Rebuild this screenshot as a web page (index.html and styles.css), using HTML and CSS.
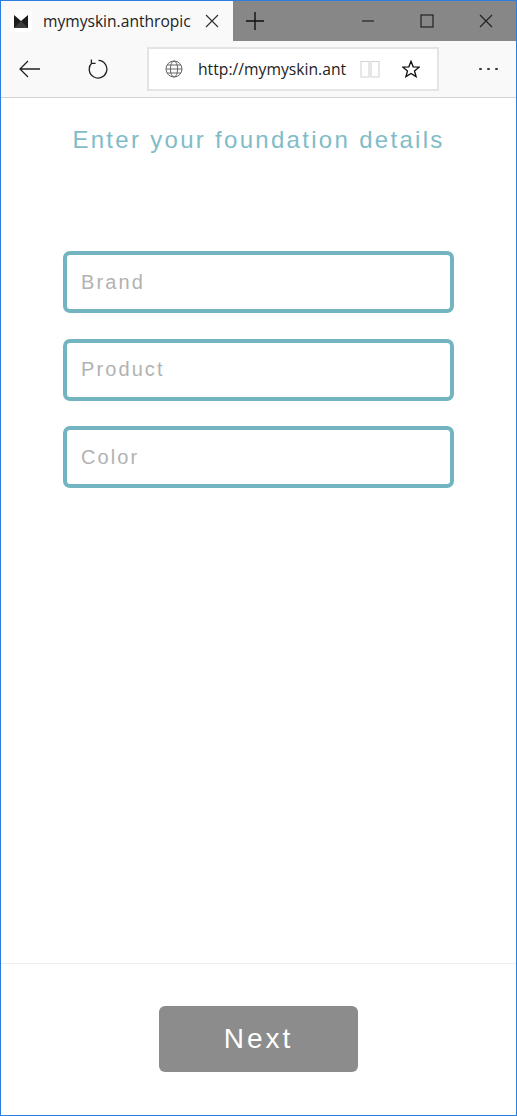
FILE: index.html
```html
<!DOCTYPE html>
<html lang="en">
  <head>
    <meta charset="UTF-8" />
    <meta name="viewport" content="width=device-width, initial-scale=1.0" />
    <title>mymyskin.anthropic</title>
    <link rel="stylesheet" href="styles.css">
  </head>
  <body>
    <div class="window">
      <!-- browser tabs -->
      <div class="tabbar">
        <div class="tab">
          <span class="favicon">
            <svg width="14" height="13" viewBox="0 0 14 13">
              <path d="M0 0 L7 6 L14 0 V13 H0 Z" fill="#1c1c1c" />
              <path d="M7 6 L14 13 H0 Z" fill="#3c3c3c" />
            </svg>
          </span>
          <span class="tab-title">mymyskin.anthropic</span>
          <svg class="tab-close" width="14" height="14" viewBox="0 0 14 14"><path d="M1 1 L13 13 M13 1 L1 13" stroke="#333" stroke-width="1.2" fill="none" /></svg>
        </div>
        <svg class="new-tab" width="18" height="18" viewBox="0 0 18 18"><path d="M9 0 V18 M0 9 H18" stroke="#111" stroke-width="1.4" fill="none" /></svg>
        <div class="window-btns">
          <svg width="14" height="14" viewBox="0 0 14 14"><path d="M1 7 H13" stroke="#222" stroke-width="1.2" fill="none" /></svg>
          <svg width="14" height="14" viewBox="0 0 14 14"><rect x="1" y="1" width="12" height="12" stroke="#222" stroke-width="1.2" fill="none" /></svg>
          <svg width="14" height="14" viewBox="0 0 14 14"><path d="M1 1 L13 13 M13 1 L1 13" stroke="#222" stroke-width="1.2" fill="none" /></svg>
        </div>
      </div>

      <!-- address bar -->
      <div class="toolbar">
        <svg class="back" width="22" height="18" viewBox="0 0 22 18"><path d="M21 9 H1 M9 1 L1 9 L9 17" stroke="#222" stroke-width="1.3" fill="none" /></svg>
        <svg class="reload" width="20" height="20" viewBox="0 0 20 20"><path d="M3.8 4 A8.8 8.8 0 1 0 10.5 1.4 M3.4 0.4 V4.4 H7.6" stroke="#222" stroke-width="1.3" fill="none" /></svg>
        <div class="urlbox">
          <svg class="globe" width="18" height="18" viewBox="0 0 18 18">
            <g stroke="#666" stroke-width="1" fill="none">
              <circle cx="9" cy="9" r="8" />
              <ellipse cx="9" cy="9" rx="3.6" ry="8" />
              <path d="M1 9 H17 M2 5 H16 M2 13 H16" />
            </g>
          </svg>
          <span class="url">http://mymyskin.ant</span>
          <svg class="book" width="20" height="18" viewBox="0 0 20 18"><path d="M1 1.5 H9 V17 H1 Z M19 1.5 H11 V17 H19 Z" stroke="#d4d4d4" stroke-width="1.1" fill="none" /></svg>
          <svg class="star" width="18" height="18" viewBox="0 0 20 20"><path d="M10 1.5 L12.4 7.6 L19 8 L13.9 12.1 L15.6 18.5 L10 15 L4.4 18.5 L6.1 12.1 L1 8 L7.6 7.6 Z" stroke="#111" stroke-width="1.5" fill="none" /></svg>
        </div>
        <div class="more"><span></span><span></span><span></span></div>
      </div>

      <!-- page -->
      <div class="page">
        <h1>Enter your foundation details</h1>
        <form class="fields">
          <input type="text" placeholder="Brand" />
          <input type="text" placeholder="Product" />
          <input type="text" placeholder="Color" />
        </form>
      </div>
      <div class="footer">
        <button type="button">Next</button>
      </div>
    </div>
  </body>
</html>
```

FILE: styles.css
```css
html,
body {
  margin: 0;
  height: 100%;
}

body {
  font-family: "Liberation Sans", Arial, sans-serif;
  background-color: white;
}

.window {
  height: 1116px;
  box-sizing: border-box;
  border: 1px solid #2b7de0;
  display: flex;
  flex-direction: column;
  overflow: hidden;
}

.tabbar {
  height: 40px;
  background-color: #878787;
  display: flex;
  align-items: center;
  flex-shrink: 0;
}

.tab {
  width: 232px;
  height: 100%;
  background-color: #f9f9f9;
  display: flex;
  align-items: center;
  box-sizing: border-box;
  padding-left: 9px;
}

.favicon {
  width: 22px;
  height: 22px;
  background-color: white;
  border-radius: 3px;
  display: flex;
  align-items: center;
  justify-content: center;
  flex-shrink: 0;
}

.tab-title {
  font-family: "Open Sans", sans-serif;
  font-size: 15.6px;
  color: #222;
  margin-left: 11px;
  white-space: nowrap;
}

.tab-close {
  margin-left: 14px;
  flex-shrink: 0;
}

.new-tab {
  margin-left: 13px;
}

.window-btns {
  margin-left: auto;
  display: flex;
  gap: 45px;
  padding-right: 23px;
}

.toolbar {
  height: 56px;
  background-color: #f9f9f9;
  border-bottom: 1px solid #d2d2d2;
  display: flex;
  align-items: center;
  flex-shrink: 0;
}

.back {
  margin-left: 18px;
}

.reload {
  margin-left: 47px;
}

.urlbox {
  width: 292px;
  height: 44px;
  margin-left: 39px;
  box-sizing: border-box;
  background-color: white;
  border: 2px solid #e4e4e4;
  display: flex;
  align-items: center;
  padding-left: 16px;
}

.url {
  font-family: "Open Sans", sans-serif;
  font-size: 15.7px;
  color: #222;
  margin-left: 15px;
  white-space: nowrap;
}

.book {
  margin-left: 14px;
  flex-shrink: 0;
}

.star {
  margin-left: 22px;
  flex-shrink: 0;
}

.more {
  margin-left: 40px;
  display: flex;
  gap: 5.5px;
}

.more span {
  width: 2.5px;
  height: 2.5px;
  background-color: #333;
  border-radius: 50%;
}

.page {
  flex: 1;
  display: flex;
  flex-direction: column;
  align-items: center;
  border-bottom: 1px solid #efefef;
}

h1 {
  margin: 28px 0 0;
  font-size: 24px;
  font-weight: normal;
  line-height: 28px;
  letter-spacing: 2.3px;
  color: #7fbcc8;
}

.fields {
  margin-top: 97px;
  display: flex;
  flex-direction: column;
  gap: 25.5px;
}

input {
  width: 391px;
  height: 62px;
  box-sizing: border-box;
  border: 4px solid #72b5c1;
  border-radius: 7px;
  padding: 0 14px;
  font-family: "Liberation Sans", Arial, sans-serif;
  font-size: 20px;
  letter-spacing: 2.1px;
  outline: none;
}

input::placeholder {
  color: #b2b2b2;
  opacity: 1;
}

.footer {
  height: 151px;
  display: flex;
  justify-content: center;
  flex-shrink: 0;
}

button {
  width: 199px;
  height: 66px;
  margin-top: 42px;
  background-color: #8c8c8c;
  color: white;
  border: none;
  border-radius: 6px;
  font-family: "Liberation Sans", Arial, sans-serif;
  font-size: 28px;
  letter-spacing: 3px;
}
```
